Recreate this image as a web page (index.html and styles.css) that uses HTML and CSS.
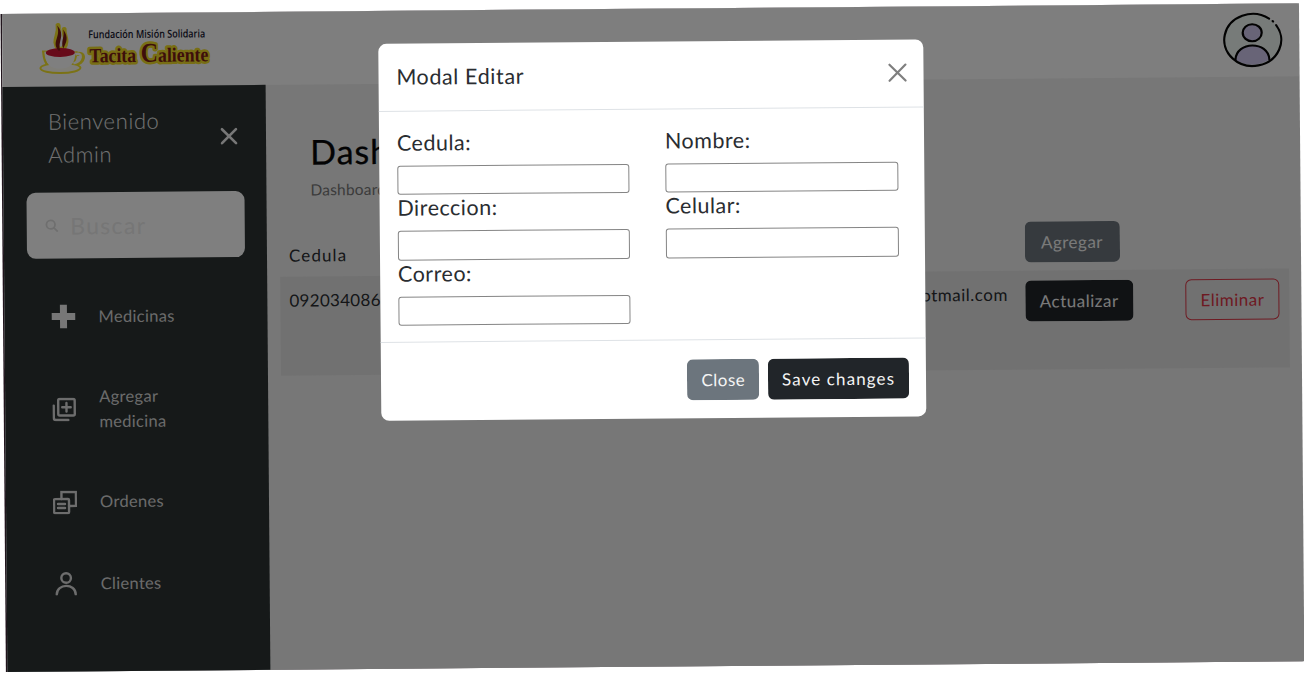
FILE: index.html
```html
<!DOCTYPE html>
<html lang="es">
<head>
<meta charset="utf-8">
<title>Dashboard</title>
<link rel="stylesheet" href="styles.css">
</head>
<body>
<div class="screen">
  <header class="topbar">
    <svg class="logo" width="180" height="60" viewBox="0 0 180 60">
      <g fill="none" stroke="#f6e52c" stroke-linecap="round">
        <path d="M22 28C14 19 23 14 21 4M26 27C32 19 26 14 27 8" stroke-width="5"/>
        <path d="M6 30C7 44 12 47 22 47C34 47 38 41 39 31Z" stroke-width="2.500"/>
        <path d="M38 33C49 29 48 43 36 43" stroke-width="4"/>
        <ellipse cx="23" cy="46.500" rx="20" ry="5" fill="#fffdf0" stroke-width="2"/>
      </g>
      <path d="M7 30C8 43 13 47 23 47C33 47 38 42 38 30Z" fill="#fff"/>
      <path d="M38 33C46 30 45 40 36 42" fill="none" stroke="#fff" stroke-width="2.400"/>
      <ellipse cx="23" cy="31" rx="14.500" ry="4.500" fill="#cf1735"/>
      <path d="M21 29C14 20 24 16 20 4C29 14 20 20 23 29ZM26 27C23 20 28 15 26 8C32 16 29 21 26 27Z" fill="#7c1d17"/>
      <text class="logo-small" x="51" y="17" textLength="117" lengthAdjust="spacingAndGlyphs">Fundación Misión Solidaria</text>
      <text class="logo-big" x="52" y="41" textLength="119" lengthAdjust="spacingAndGlyphs">Tacita <tspan class="logo-cap">C</tspan>aliente</text>
    </svg>
    <svg class="avatar" width="62" height="56" viewBox="0 0 62 56">
      <ellipse cx="31" cy="28" rx="28.5" ry="26" fill="#eef6f2"/>
      <path d="M14 48C15 29 47 29 48 48Q32 58 14 48Z" fill="#d0c8ee"/>
      <ellipse cx="31" cy="21" rx="9.5" ry="8.5" fill="#d0c8ee"/>
      <g fill="none" stroke="#050505" stroke-width="2.2" stroke-linecap="round">
        <path d="M48 7A28.5 26 0 1 0 55 13.500"/>
        <path d="M51.500 9.500L52 10"/>
        <ellipse cx="31" cy="21" rx="9.5" ry="8.5"/>
        <path d="M14 48C15 29 47 29 48 48"/>
      </g>
    </svg>
  </header>

  <div class="content">
    <aside class="sidebar">
      <div class="welcome">
        <span class="welcome-text">Bienvenido<br>Admin</span>
        <svg width="18" height="18" viewBox="0 0 18 18"><path d="M2 2L16 16M16 2L2 16" stroke="#eee" stroke-width="2.600" stroke-linecap="round"/></svg>
      </div>
      <div class="search">
        <svg width="14" height="14" viewBox="0 0 14 14" fill="none" stroke="#dedede" stroke-width="1.800"><circle cx="6" cy="6" r="4.300"/><path d="M9 9L13 13"/></svg>
        <span>Buscar</span>
      </div>
      <nav class="menu">
        <a class="item">
          <svg width="24" height="24" viewBox="0 0 24 24"><path d="M8.500 0H15.500V8.500H24V15.500H15.500V24H8.500V15.500H0V8.500H8.500Z" fill="#eee"/></svg>
          <span>Medicinas</span>
        </a>
        <a class="item tall">
          <svg class="line" width="24" height="24" viewBox="0 0 24 24"><rect x="6" y="1.500" width="16.500" height="16.500" rx="1.500"/><path d="M14.250 5.500V14M10 9.750H18.500M1.500 8V20.500Q1.500 22.500 3.500 22.500H16"/></svg>
          <span>Agregar<br>medicina</span>
        </a>
        <a class="item">
          <svg class="line" width="24" height="24" viewBox="0 0 24 24"><rect x="1" y="8.500" width="15" height="14" rx="1"/><path d="M8.500 8.500V1.500H23V15.500H16M5 13.500H12M5 17.500H12"/></svg>
          <span>Ordenes</span>
        </a>
        <a class="item">
          <svg class="line" width="24" height="24" viewBox="0 0 24 24"><circle cx="12.500" cy="6.500" r="4.800"/><path d="M3 23C3 11.500 22 11.500 22 23"/></svg>
          <span>Clientes</span>
        </a>
      </nav>
    </aside>

    <main class="main">
      <h1 class="title">Dashboard</h1>
      <p class="crumb">Dashboard</p>
      <div class="grid head">
        <span class="cell bold">Cedula</span>
        <span></span>
        <span><button class="btn secondary agregar">Agregar</button></span>
      </div>
      <div class="grid row">
        <span class="cell num">0920340866</span>
        <span class="cell mail">hotmail.com</span>
        <span><button class="btn dark actualizar">Actualizar</button></span>
        <span><button class="btn danger eliminar">Eliminar</button></span>
      </div>
    </main>
  </div>

  <div class="backdrop">
    <section class="modal">
      <div class="modal-head">
        <h2 class="modal-title">Modal Editar</h2>
        <svg width="20" height="20" viewBox="0 0 20 20"><path d="M2 2L18 18M18 2L2 18" stroke="#7f7f7f" stroke-width="2.200" stroke-linecap="round"/></svg>
      </div>
      <div class="fields">
        <label class="field"><span>Cedula:</span><input></label>
        <label class="field"><span>Nombre:</span><input></label>
        <label class="field"><span>Direccion:</span><input></label>
        <label class="field"><span>Celular:</span><input></label>
        <label class="field"><span>Correo:</span><input></label>
      </div>
      <div class="modal-foot">
        <button class="btn secondary close">Close</button>
        <button class="btn dark save">Save changes</button>
      </div>
    </section>
  </div>
</div>
</body>
</html>
```
FILE: styles.css
```css
* { box-sizing: border-box; }
html { background: #fff; overflow: hidden; }
body { margin: 0; padding: 13.800px 0 0 1.500px; height: 673px; overflow: hidden; font-family: Lato, "Noto Sans", sans-serif; color: #2a2d31; }
h1, h2, p { margin: 0; font-weight: 400; }

/* The whole screen is tilted slightly anticlockwise */
.screen { position: relative; width: 1297px; height: 658px; transform-origin: 0 0; transform: rotate(-0.47deg); background: #efefef; box-shadow: -1.5px 0 0 #21151d; }
.topbar { height: 72.5px; background: #fdfdfd; display: flex; justify-content: space-between; padding: 8px 16px 0 35px; }
.logo { overflow: visible; }
.logo-small { font: 600 11px "Open Sans", sans-serif; fill: #181830; }
.logo-big { font: 700 20px "Liberation Serif", serif; fill: #7c1d17; stroke: #f0dc28; stroke-width: 5px; stroke-linejoin: round; paint-order: stroke; }
.logo-cap { font-size: 27px; }

.content { display: flex; height: 585.5px; }
.sidebar { width: 262.5px; background: #2c3333; color: #e6e6e6; }
.welcome { height: 106.5px; padding: 18px 28px 0 45px; display: flex; justify-content: space-between; align-items: flex-start; font-size: 22px; line-height: 33px; font-weight: 300; }
.welcome svg { margin-top: 24px; }
.welcome-text { letter-spacing: .6px; }
.search { margin: 0 22px 0 22.500px; height: 66px; border-radius: 9px; background: #fff; display: flex; align-items: center; gap: 12px; padding-left: 18px; color: #ececec; font-size: 23px; letter-spacing: 1.3px; }
.menu { padding: 28px 0 0 47px; }
.item { height: 60px; display: flex; align-items: center; gap: 23px; font-size: 16.500px; line-height: 25px; color: #d6d6d6; letter-spacing: .3px; }
.item.tall { height: 70px; margin-top: 27.500px; }
.item.tall + .item { margin-top: 28px; }
.item:last-child { margin-top: 21.500px; }
.line { fill: none; stroke: #dadada; stroke-width: 2.400; stroke-linecap: round; }

.main { flex: 1; padding: 43px 12px 0 13.500px; }
.title { margin-left: 31px; font-size: 34px; line-height: 48px; letter-spacing: 1px; color: #060708; -webkit-text-stroke: .3px #060708; }
.crumb { margin-left: 31px; font-size: 15.500px; line-height: 28px; letter-spacing: .2px; color: #777; }
.grid { display: grid; grid-template-columns: 380px 364.500px 160.500px 1fr; }
.head { height: 73px; padding-top: 24px; }
.row { height: 99px; padding-top: 10px; background: #e3e3e3; }
.cell { padding-left: 9px; font-size: 17px; line-height: 28px; letter-spacing: .5px; }
.bold { padding-top: 14px; letter-spacing: 1.1px; }
.num { letter-spacing: .3px; }
.mail { justify-self: end; padding: 0 17px 0 0; }

.btn { height: 41.500px; padding: 0; border: 1px solid transparent; border-radius: 6px; font: 400 17px Lato, sans-serif; letter-spacing: .5px; color: #f4f4f4; text-align: center; white-space: nowrap; }
.secondary { background: #6c757d; }
.dark { background: #212529; }
.danger { background: transparent; border-color: #dc3545; color: #dc3545; }
.agregar { width: 95px; }
.actualizar { width: 108.500px; }
.eliminar { width: 94px; }

.backdrop { position: absolute; inset: 0; background: rgba(0, 0, 0, .5); padding: 32.500px 0 0 375.800px; }
.modal { width: 545px; height: 377px; border-radius: 8px; background: #fff; }
.modal-head { height: 68.500px; padding: 0 16px 0 18px; display: flex; align-items: center; justify-content: space-between; border-bottom: 1px solid #dee2e6; }
.modal-title { font-size: 21.500px; letter-spacing: .6px; }
.fields { height: 231px; padding: 17.500px 26px 0 18px; display: grid; grid-template-columns: 232px 233px; column-gap: 36px; grid-auto-rows: 65.500px; border-bottom: 1px solid #dee2e6; }
.field { display: block; font-size: 21.500px; line-height: 27px; letter-spacing: .5px; }
.field span { display: block; margin-bottom: 9px; }
.field input { display: block; width: 100%; height: 29.500px; border: 1px solid #858585; border-radius: 3px; background: #fff; }
.modal-foot { display: flex; justify-content: flex-end; gap: 9px; padding: 18.500px 17px 0 0; }
.close { width: 72px; }
.save { width: 140.500px; letter-spacing: 1.100px; }
```
